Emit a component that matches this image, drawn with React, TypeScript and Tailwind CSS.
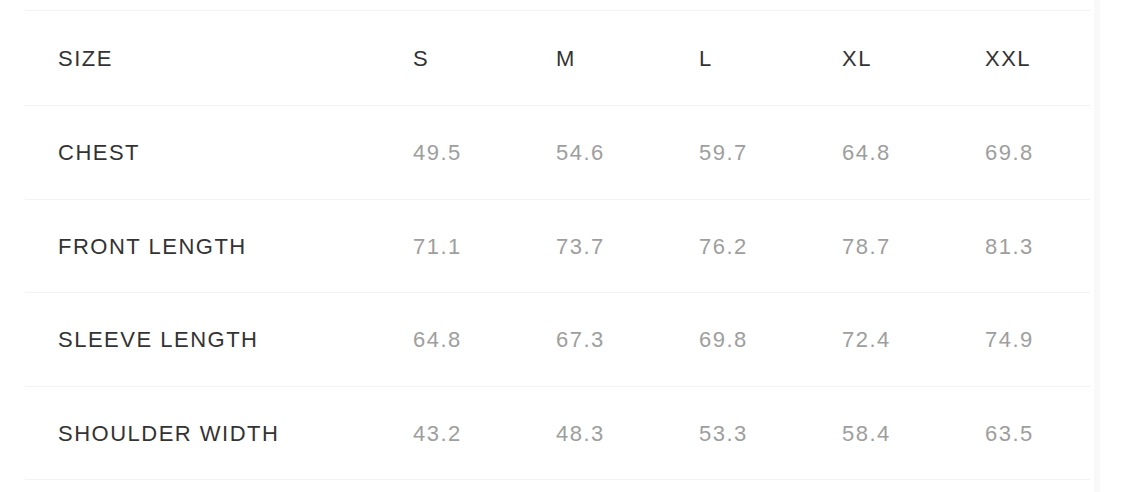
import React from "react";

const rows: { label: string; values: string[]; h: string }[] = [
  { label: "CHEST", values: ["49.5", "54.6", "59.7", "64.8", "69.8"], h: "h-[94px]" },
  { label: "FRONT LENGTH", values: ["71.1", "73.7", "76.2", "78.7", "81.3"], h: "h-[93px]" },
  { label: "SLEEVE LENGTH", values: ["64.8", "67.3", "69.8", "72.4", "74.9"], h: "h-[94px]" },
  { label: "SHOULDER WIDTH", values: ["43.2", "48.3", "53.3", "58.4", "63.5"], h: "h-[93px]" },
];

const sizes = ["S", "M", "L", "XL", "XXL"];

export default function App() {
  return (
    <div
      className="w-[1125px] h-[492px] bg-white overflow-hidden flex"
      style={{ fontFamily: '"Liberation Sans", Arial, sans-serif' }}
    >
      <div className="w-[1100px] shrink-0 h-full border-r-[6px] border-[#f9f9f9] pt-[10px]">
        <div className="ml-[25px] w-[1065px] border-t border-[#f3f3f3]">
          <div className="flex items-center h-[94px] text-[22px] tracking-[1.5px] text-[#333]">
            <div className="w-[388px] shrink-0 pl-[33px]">SIZE</div>
            {sizes.map((s) => (
              <div key={s} className="w-[143px] shrink-0">
                {s}
              </div>
            ))}
          </div>
          {rows.map((r) => (
            <div
              key={r.label}
              className={`flex items-center ${r.h} border-t border-[#f3f3f3] text-[22px] tracking-[1.5px]`}
            >
              <div className="w-[388px] shrink-0 pl-[33px] text-[#333]">{r.label}</div>
              {r.values.map((v, i) => (
                <div key={i} className="w-[143px] shrink-0 text-[#9e9e9e]">
                  {v}
                </div>
              ))}
            </div>
          ))}
          <div className="border-t border-[#f3f3f3]" />
        </div>
      </div>
    </div>
  );
}
